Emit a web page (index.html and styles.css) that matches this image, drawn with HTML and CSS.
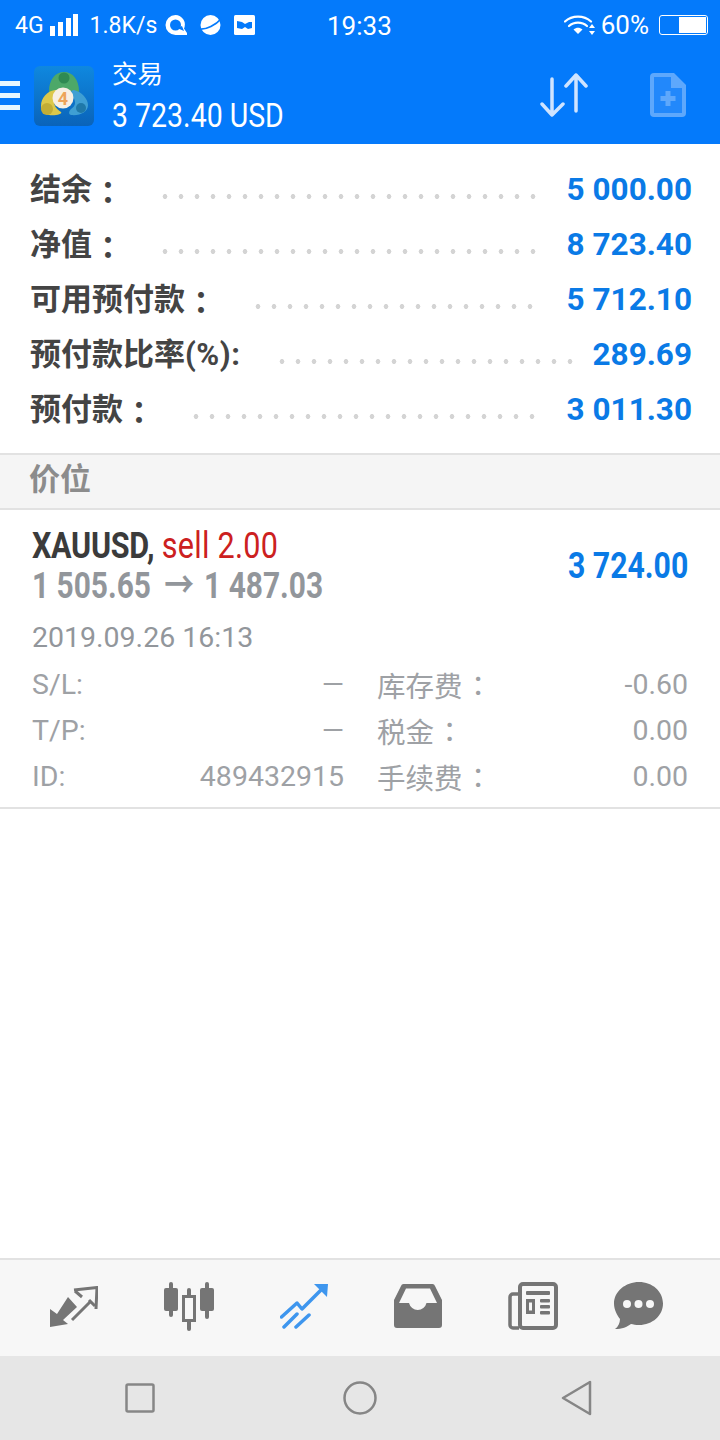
FILE: index.html
```html
<!DOCTYPE html>
<html lang="zh">
<head>
    <meta charset="UTF-8">
    <meta name="viewport" content="width=device-width, initial-scale=1.0">
    <title>交易</title>
    <link rel="stylesheet" href="styles.css">
</head>
<body>
    <div class="phone">
        <header class="app-head">
            <div class="status-bar">
                <div class="status-left">
                    <span>4G</span>
                    <svg class="signal" width="28" height="22" viewBox="0 0 28 22"><rect x="0" y="12" width="5" height="10"/><rect x="8" y="8" width="5" height="14"/><rect x="16" y="4" width="5" height="18"/><rect x="23" y="0" width="5" height="22"/></svg>
                    <span class="speed">1.8K/s</span>
                    <svg class="notif" width="22" height="20" viewBox="0 0 22 20"><path d="M10.500 0a9.500 9.500 0 0 1 8.500 13.500l3 4.500v2H10.500a10 10 0 0 1 0-20z" fill="#fff"/><circle cx="10.500" cy="10" r="5.500" fill="#047afb"/><path d="M12 13l5-2 2 5z" fill="#047afb"/></svg>
                    <svg class="notif" width="23" height="20" viewBox="0 0 23 20"><circle cx="11.500" cy="10" r="10" fill="#fff"/><path d="M0 14c7 1 17-4 23-11" stroke="#047afb" stroke-width="1.800" fill="none"/></svg>
                    <svg class="notif" width="21" height="20" viewBox="0 0 21 20"><rect width="21" height="20" rx="1.500" fill="#fff"/><path d="M3 6l5 1 3 2 4-2 3 0v6l-4 1-3-2-3 2-5-1z" fill="#047afb"/></svg>
                </div>
                <div class="clock">19:33</div>
                <div class="status-right">
                    <svg width="31" height="22" viewBox="0 0 31 22"><g fill="none" stroke="#fff" stroke-width="2.200" stroke-linecap="round"><path d="M1 7.500C8 1 20 1 27 7.500"/><path d="M5 12c5-4.500 13-4.500 18 0"/></g><path d="M9.500 15.500c3-2.500 6-2.500 9 0L14 20z" fill="#fff"/><path d="M28 10l3 4h-6zM28 21l3-4h-6z" fill="#fff"/></svg>
                    <span>60%</span>
                    <div class="battery"><div class="battery-fill"></div></div>
                </div>
            </div>
            <div class="toolbar">
                <div class="burger"><i></i><i></i><i></i></div>
                <svg class="logo" width="60" height="60" viewBox="0 0 60 60">
                    <defs>
                        <linearGradient id="logo-bg" x1="0" y1="0" x2="0" y2="1">
                            <stop offset="0" stop-color="#0f88df"/>
                            <stop offset="1" stop-color="#0a63b9"/>
                        </linearGradient>
                    </defs>
                    <rect width="60" height="60" rx="6" fill="url(#logo-bg)"/>
                    <path d="M30 6C39 6 45 14 45 25C45 28 42 28 40 27C34 22 26 22 20 27C18 28 15 28 15 25C15 14 21 6 30 6z" fill="#4da868"/>
                    <circle cx="30" cy="12" r="5.500" fill="#2f8a52"/>
                    <path d="M7 40C7 32 13 25 21 24C25 24 23 30 21 33C19 38 21 42 27 46C29 48 21 50 15 49C10 48 7 45 7 40z" fill="#dcc84a"/>
                    <circle cx="13" cy="43" r="6" fill="#c2ad35"/>
                    <path d="M40 24C48 26 54 33 54 39C54 46 46 50 37 49C34 48 35 45 37 43C42 40 42 35 39 31C37 28 36 24 40 24z" fill="#3f9fd3"/>
                    <circle cx="47" cy="42" r="5" fill="#1f78a8"/>
                    <circle cx="29" cy="32" r="10.500" fill="#f7efe3"/>
                    <text class="logo-num" x="29" y="38.500" text-anchor="middle">4</text>
                </svg>
                <div class="title-block">
                    <div class="title">交易</div>
                    <div class="balance">3 723.40 USD</div>
                </div>
                <div class="tool-icons">
                    <svg width="48" height="44" viewBox="0 0 48 44"><g fill="none" stroke="#cfe4ff" stroke-width="3.500" stroke-linecap="round" stroke-linejoin="round"><path d="M12 6v36M2 31l10 11 11-11"/><path d="M36 38V2M26 13L36 2l10 11"/></g></svg>
                    <svg width="36" height="44" viewBox="0 0 36 44"><path d="M4 0h20l12 12v28a4 4 0 0 1-4 4H4a4 4 0 0 1-4-4V4a4 4 0 0 1 4-4z" fill="#5ea8fc"/><path d="M4 4h17v11h11v25H4z" fill="#2288fb"/><path d="M18 18v15M10.500 25.500h15" stroke="#5ea8fc" stroke-width="5"/></svg>
                </div>
            </div>
        </header>

        <section class="summary">
            <div class="sum-row"><span class="sum-label">结余<span class="colon">：</span></span><span class="dots"></span><span class="sum-value">5 000.00</span></div>
            <div class="sum-row"><span class="sum-label">净值<span class="colon">：</span></span><span class="dots"></span><span class="sum-value">8 723.40</span></div>
            <div class="sum-row"><span class="sum-label">可用预付款<span class="colon">：</span></span><span class="dots"></span><span class="sum-value">5 712.10</span></div>
            <div class="sum-row"><span class="sum-label">预付款比率<span class="percent">(%):</span></span><span class="dots dots-long"></span><span class="sum-value">289.69</span></div>
            <div class="sum-row"><span class="sum-label">预付款<span class="colon">：</span></span><span class="dots"></span><span class="sum-value">3 011.30</span></div>
        </section>

        <div class="section-head">价位</div>

        <section class="position">
            <div class="pos-top">
                <div>
                    <div class="pos-name"><b>XAUUSD,</b> <span class="sell">sell 2.00</span></div>
                    <div class="pos-price">1 505.65<span class="arrow">→</span>1 487.03</div>
                </div>
                <div class="pos-profit">3 724.00</div>
            </div>
            <div class="pos-date">2019.09.26 16:13</div>
            <div class="pos-grid">
                <span>S/L:</span><span class="num">—</span><span class="cn">库存费<span class="colon">：</span></span><span class="num">-0.60</span>
                <span>T/P:</span><span class="num">—</span><span class="cn">税金<span class="colon">：</span></span><span class="num">0.00</span>
                <span>ID:</span><span class="num">489432915</span><span class="cn">手续费<span class="colon">：</span></span><span class="num">0.00</span>
            </div>
        </section>

        <div class="spacer"></div>

        <nav class="tabs">
            <svg width="48" height="41" viewBox="0 0 48 41"><path d="M0 41V23l7 5 11-17 9 10-14 13 5 4z" fill="#757575"/><g fill="none" stroke="#757575" stroke-width="3"><path d="M24 4L47 1.500 46 23"/><path d="M25 5l7 6M45 20l-6-6"/><path d="M22 34L41 15"/></g></svg>
            <svg width="50" height="49" viewBox="0 0 50 49"><g fill="#757575"><rect x="0" y="6" width="14" height="23" rx="2"/><rect x="5" y="0" width="4" height="35" rx="2"/><rect x="36" y="6" width="14" height="23" rx="2"/><rect x="41" y="0" width="4" height="37" rx="2"/><rect x="23" y="6" width="4" height="43" rx="2"/></g><rect x="19.500" y="14.500" width="11" height="24" fill="#f7f7f7" stroke="#757575" stroke-width="3"/></svg>
            <svg width="48" height="45" viewBox="0 0 48 45"><g fill="none" stroke="#3e96ee" stroke-width="3.500" stroke-linecap="round" stroke-linejoin="round"><path d="M1.500 33L17 19l5 6L44 3"/><path d="M4 43l13-13M16 43l13-12"/></g><path d="M34 0l14 0-1 13z" fill="#3e96ee"/></svg>
            <svg width="48" height="44" viewBox="0 0 48 44"><path d="M10 0h28a3 3 0 0 1 3 2l7 14v25a3 3 0 0 1-3 3H3a3 3 0 0 1-3-3V16L7 2a3 3 0 0 1 3-2z" fill="#757575"/><path d="M12 4.500h24L43 19H32.500a9 9 0 0 1-17.500 0H5z" fill="#f7f7f7"/></svg>
            <svg width="50" height="48" viewBox="0 0 50 48"><path d="M10 12H5a3 3 0 0 0-3 3v28a3 3 0 0 0 3 3h6" fill="none" stroke="#757575" stroke-width="3.500"/><rect x="12" y="2" width="36" height="44" rx="3" fill="#f7f7f7" stroke="#757575" stroke-width="4"/><g fill="#757575"><rect x="18" y="9" width="24" height="4" rx="1"/><rect x="18" y="17" width="9" height="15"/><rect x="32" y="17" width="10" height="3.500" rx="1"/><rect x="32" y="23" width="10" height="3.500" rx="1"/><rect x="32" y="29" width="10" height="3.500" rx="1"/></g><rect x="21" y="20.500" width="3" height="8" fill="#f7f7f7"/></svg>
            <svg class="tab-chat" width="49" height="48" viewBox="0 0 49 48"><path d="M25 0c13.500 0 24 9.500 24 21.500S38.500 43 25 43c-3 0-6-.5-8-1-4 3-9 5-16 5 3-2 5-6 5-10C3 33 0 27.500 0 21.500 0 9.500 11.500 0 25 0z" fill="#757575"/><g fill="#f7f7f7"><circle cx="13" cy="22" r="4"/><circle cx="24.500" cy="22" r="4"/><circle cx="36" cy="22" r="4"/></g></svg>
        </nav>

        <nav class="sys-nav">
            <svg width="30" height="30" viewBox="0 0 30 30"><rect x="1.500" y="1.500" width="27" height="27" rx="1.500" fill="none" stroke="#868686" stroke-width="2.500"/></svg>
            <svg width="34" height="34" viewBox="0 0 34 34"><circle cx="17" cy="17" r="15.500" fill="none" stroke="#868686" stroke-width="2.500"/></svg>
            <svg class="sys-back" width="32" height="36" viewBox="0 0 32 36"><path d="M30 2v32L3 18z" fill="none" stroke="#868686" stroke-width="2.500" stroke-linejoin="round"/></svg>
        </nav>
    </div>
</body>
</html>
```

FILE: styles.css
```css
* {
    box-sizing: border-box;
    margin: 0;
    padding: 0;
}

body {
    font-family: Roboto, "Noto Sans CJK SC", sans-serif;
    background-color: #fff;
}

.phone {
    width: 720px;
    height: 1440px;
    display: flex;
    flex-direction: column;
    overflow: hidden;
}

/* the full-width colon sits in the middle of its box on the phone */
.colon {
    display: inline-block;
    transform: translate(0.3em, -0.06em);
}

.app-head {
    height: 144px;
    background-color: #047afb;
    color: #fff;
}

.status-bar {
    height: 52px;
    padding: 0 12px 2px 15px;
    display: flex;
    align-items: center;
    justify-content: space-between;
    font-size: 23px;
    position: relative;
}

.status-left,
.status-right {
    display: flex;
    align-items: center;
}

.signal {
    margin-left: 6px;
    fill: #fff;
}

.speed {
    margin: 0 8px 0 12px;
}

.notif {
    margin-right: 12px;
}

.clock {
    font-size: 26px;
    position: absolute;
    left: 327px;
    top: 11px;
}

.status-right {
    font-size: 26px;
}

.status-right svg {
    margin-right: 6px;
}

.battery {
    width: 49px;
    height: 20px;
    margin-left: 10px;
    border: 1px solid #fff;
    border-radius: 3px;
    padding: 1px;
    display: flex;
    justify-content: flex-end;
}

.battery-fill {
    width: 27px;
    background-color: #fff;
}

.toolbar {
    height: 92px;
    display: flex;
    align-items: center;
    padding-bottom: 6px;
}

.burger {
    width: 20px;
    height: 29px;
    margin-right: 14px;
    display: flex;
    flex-direction: column;
    justify-content: space-between;
}

.burger i {
    display: block;
    height: 5px;
    background-color: #e6f6ff;
}

.logo {
    margin-top: 2px;
}

.logo-num {
    font-size: 18px;
    font-weight: bold;
    fill: #eda45a;
}

.title-block {
    margin-left: 18px;
    flex: 1;
}

.title {
    font-size: 25.500px;
    line-height: 34px;
}

.balance {
    margin-top: 5px;
    font-size: 34px;
    line-height: 38px;
    transform: scaleX(0.838);
    transform-origin: left;
}

.tool-icons {
    display: flex;
    align-items: center;
    gap: 62px;
    margin-right: 34px;
}

.summary {
    height: 311px;
    padding: 18px 28px 0 30px;
    border-bottom: 2px solid #e2e2e2;
}

.sum-row {
    height: 55px;
    display: flex;
    align-items: center;
}

.sum-label {
    margin-bottom: 6px;
    font-size: 31px;
    font-weight: 700;
    color: #444;
    white-space: nowrap;
}

.sum-label .colon {
    transform: translate(0.27em, 0.05em);
}

.percent {
    letter-spacing: 0.500px;
}

.dots {
    flex: 1;
    margin: 14px 28px 0 34px;
    height: 5px;
    background-image: radial-gradient(circle, #d4d4d4 2.100px, transparent 2.700px);
    background-size: 16px 5px;
}

.dots-long {
    margin-right: 13px;
}

.sum-value {
    font-size: 31.500px;
    font-weight: 700;
    color: #0a7ae6;
}

.section-head {
    height: 55px;
    padding-left: 29px;
    background-color: #f5f5f5;
    border-bottom: 2px solid #e2e2e2;
    font-size: 31px;
    font-weight: 700;
    line-height: 50px;
    color: #8c8c8c;
}

.position {
    height: 299px;
    padding: 16px 32px 0;
    border-bottom: 2px solid #e2e2e2;
}

.pos-top {
    display: flex;
    justify-content: space-between;
    align-items: center;
}

.pos-name {
    font-size: 36px;
    line-height: 40px;
    color: #cc2020;
    transform: scaleX(0.85);
    transform-origin: left;
}

.pos-name b {
    color: #3b3b3b;
    letter-spacing: -0.400px;
}

.sell {
    letter-spacing: 0.300px;
}

.pos-price {
    font-size: 36px;
    line-height: 40px;
    font-weight: 700;
    color: #92969b;
    white-space: nowrap;
    transform: scaleX(0.83);
    transform-origin: left;
}

.arrow {
    margin: 0 12px 0 16px;
}

.pos-profit {
    font-size: 36px;
    font-weight: 700;
    color: #0a7ae6;
    transform: scaleX(0.84);
    transform-origin: right;
}

.pos-date {
    margin-top: 9px;
    font-size: 28.500px;
    line-height: 46px;
    color: #92969b;
}

.pos-grid {
    display: grid;
    grid-template-columns: 80px 232px 1fr 120px;
    grid-auto-rows: 46px;
    align-items: center;
    font-size: 28.500px;
    color: #9ea1a5;
}

.num {
    text-align: right;
}

.cn {
    padding-left: 33px;
}

.spacer {
    flex: 1;
}

.tabs {
    height: 98px;
    background-color: #f7f7f7;
    border-top: 2px solid #e2e2e2;
    display: flex;
    align-items: center;
    gap: 66px;
    padding: 0 0 4px 50px;
}

.tab-chat {
    margin-left: -10px;
}

.sys-nav {
    height: 84px;
    background-color: #e6e6e6;
    display: flex;
    align-items: center;
    gap: 188px;
    padding-left: 125px;
}

.sys-back {
    margin-left: -5px;
}
```
